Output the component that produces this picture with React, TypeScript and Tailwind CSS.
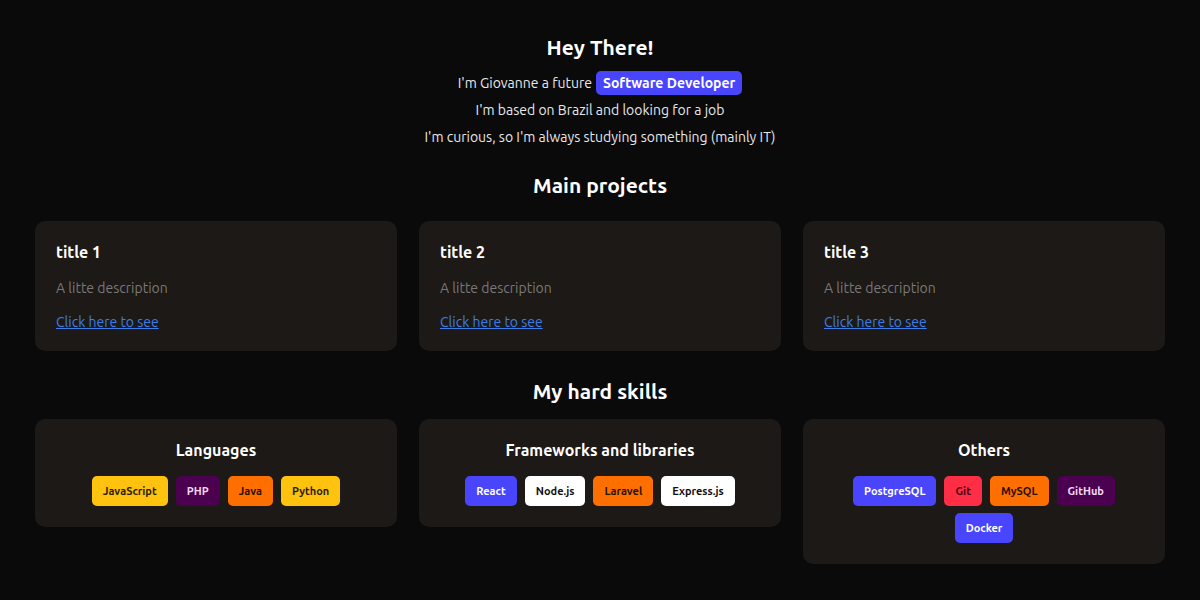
import React from "react";

type Badge = { label: string; cls: string };

const projects = ["title 1", "title 2", "title 3"];

const skills: { title: string; items: Badge[] }[] = [
  {
    title: "Languages",
    items: [
      { label: "JavaScript", cls: "bg-[#ffc20e] text-[#2a1d00]" },
      { label: "PHP", cls: "bg-[#4b0050] text-[#f3dcf5]" },
      { label: "Java", cls: "bg-[#ff6f00] text-[#2a1200]" },
      { label: "Python", cls: "bg-[#ffc20e] text-[#2a1d00]" },
    ],
  },
  {
    title: "Frameworks and libraries",
    items: [
      { label: "React", cls: "bg-[#4845fc] text-white" },
      { label: "Node.js", cls: "bg-white text-[#111111]" },
      { label: "Laravel", cls: "bg-[#ff6f00] text-[#2a1200]" },
      { label: "Express.js", cls: "bg-white text-[#111111]" },
    ],
  },
  {
    title: "Others",
    items: [
      { label: "PostgreSQL", cls: "bg-[#4845fc] text-white" },
      { label: "Git", cls: "bg-[#ff2d45] text-[#4a0010]" },
      { label: "MySQL", cls: "bg-[#ff6f00] text-[#2a1200]" },
      { label: "GitHub", cls: "bg-[#4b0050] text-[#f3dcf5]" },
      { label: "Docker", cls: "bg-[#4845fc] text-white" },
    ],
  },
];

export default function App() {
  return (
    <div
      className="min-h-screen bg-[#0a0a0a] text-white px-[35px] pt-[34px] pb-10"
      style={{ fontFamily: '"Ubuntu", "Noto Sans", "Open Sans", sans-serif' }}
    >
      <section className="flex flex-col items-center">
        <h1 className="text-[21px] leading-[26px] font-bold">Hey There!</h1>
        <p className="mt-[11px] text-[14px] leading-[24px] text-[#e8e8e8] flex items-center gap-[4px]">
          I'm Giovanne a future
          <span className="bg-[#4845fc] text-white font-bold rounded-[5px] px-[7px] leading-[24px]">
            Software Developer
          </span>
        </p>
        <p className="mt-[3px] text-[14px] leading-[24px] text-[#e8e8e8]">
          I'm based on Brazil and looking for a job
        </p>
        <p className="mt-[3px] text-[14px] leading-[24px] text-[#e8e8e8]">
          I'm curious, so I'm always studying something (mainly IT)
        </p>
      </section>

      <h2 className="mt-[22px] text-center text-[21px] leading-[28px] font-bold">Main projects</h2>
      <div className="mt-[22px] grid grid-cols-3 gap-[22px]">
        {projects.map((t) => (
          <div key={t} className="bg-[#1c1917] rounded-[10px] h-[130px] px-[21px] pt-[20px]">
            <h3 className="text-[16px] leading-[22px] font-bold">{t}</h3>
            <p className="mt-[14px] text-[14px] leading-[22px] text-[#7b7876]">A litte description</p>
            <a href="#" className="mt-[12px] block text-[14px] leading-[22px] text-[#3d7ee6] underline">
              Click here to see
            </a>
          </div>
        ))}
      </div>

      <h2 className="mt-[26px] text-center text-[21px] leading-[28px] font-bold">My hard skills</h2>
      <div className="mt-[14px] grid grid-cols-3 gap-[22px] items-start">
        {skills.map((s) => (
          <div key={s.title} className="bg-[#1c1917] rounded-[10px] pt-[20px] pb-[21px] px-[26px] flex flex-col items-center">
            <h3 className="text-[16px] leading-[22px] font-bold">{s.title}</h3>
            <div className="mt-[15px] flex flex-wrap justify-center gap-x-[8px] gap-y-[7px]">
              {s.items.map((b) => (
                <span
                  key={b.label}
                  className={`${b.cls} h-[30px] px-[11px] rounded-[5px] text-[11px] font-bold flex items-center`}
                >
                  {b.label}
                </span>
              ))}
            </div>
          </div>
        ))}
      </div>
    </div>
  );
}
